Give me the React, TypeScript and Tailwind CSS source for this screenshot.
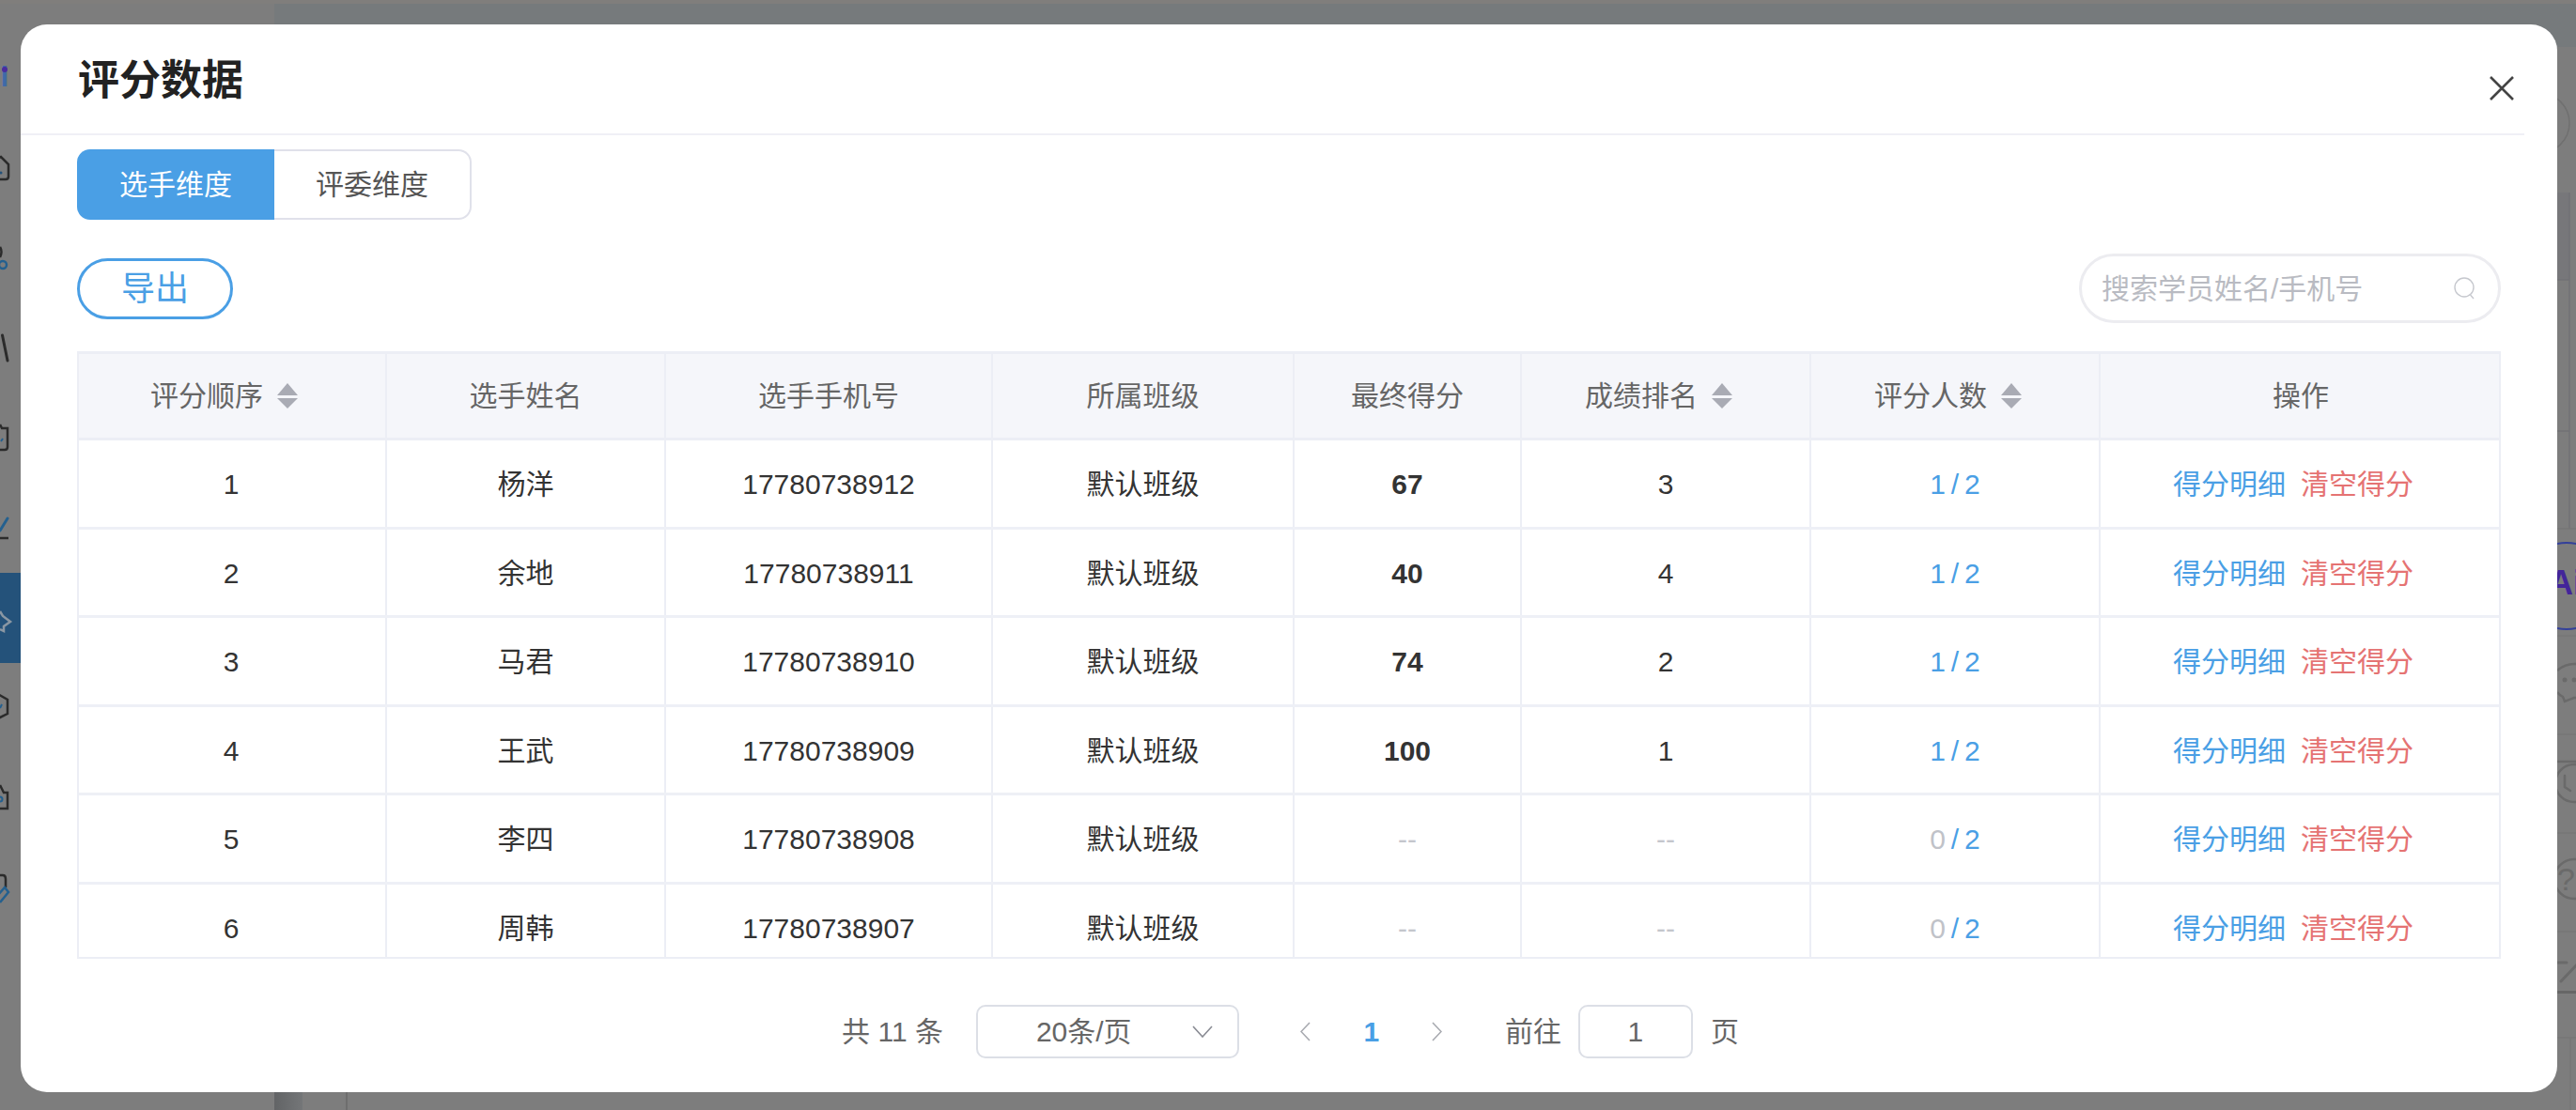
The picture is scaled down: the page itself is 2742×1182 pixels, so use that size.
const columns = 'grid-cols-[330px_297px_348px_321px_242px_308px_308px_426px]'

const rows = [
  { no: 1, name: '杨洋', phone: '17780738912', score: '67', rank: '3', done: 1 },
  { no: 2, name: '余地', phone: '17780738911', score: '40', rank: '4', done: 1 },
  { no: 3, name: '马君', phone: '17780738910', score: '74', rank: '2', done: 1 },
  { no: 4, name: '王武', phone: '17780738909', score: '100', rank: '1', done: 1 },
  { no: 5, name: '李四', phone: '17780738908', score: '--', rank: '--', done: 0 },
  { no: 6, name: '周韩', phone: '17780738907', score: '--', rank: '--', done: 0 },
]

function SortIcon() {
  return (
    <svg viewBox="0 0 22 27" className="mx-[15px] h-[27px] w-[22px] shrink-0">
      <path d="M11 0 22 13H0Z" fill="#a9abb4" />
      <path d="M0 16H22L11 27Z" fill="#a9abb4" />
    </svg>
  )
}

function HeadCell({ label, sort, last }: { label: string; sort?: boolean; last?: boolean }) {
  return (
    <div className={`flex items-center justify-center ${last ? '' : 'border-r-2 border-[#eceef5]'}`}>
      <span>{label}</span>
      {sort && <SortIcon />}
    </div>
  )
}

function Cell({ children, last, bold }: { children: React.ReactNode; last?: boolean; bold?: boolean }) {
  return (
    <div className={`flex items-center justify-center pt-[2px] ${last ? '' : 'border-r-2 border-[#eceef5]'} ${bold ? 'font-bold' : ''}`}>
      {children}
    </div>
  )
}

function Table() {
  return (
    <div className="mt-[30px] h-[647px] w-[2580px] overflow-hidden border-x-2 border-b-2 border-[#eceef5]">
      <div className={`grid h-[95px] ${columns} -mx-[2px] border-y-[3px] border-[#eceef5] bg-[#f5f6fa] text-[#666666]`}>
        <HeadCell label="评分顺序" sort />
        <HeadCell label="选手姓名" />
        <HeadCell label="选手手机号" />
        <HeadCell label="所属班级" />
        <HeadCell label="最终得分" />
        <HeadCell label="成绩排名" sort />
        <HeadCell label="评分人数" sort />
        <HeadCell label="操作" last />
      </div>
      {rows.map((r) => (
        <div key={r.no} className={`grid h-[94.5px] ${columns} -mx-[2px] border-b-[3px] border-[#eef0f6] text-[#333333]`}>
          <Cell>{r.no}</Cell>
          <Cell>{r.name}</Cell>
          <Cell>{r.phone}</Cell>
          <Cell>默认班级</Cell>
          <Cell bold={r.done > 0}>{r.done > 0 ? r.score : <span className="text-[#c4c6cc]">--</span>}</Cell>
          <Cell>{r.done > 0 ? r.rank : <span className="text-[#c4c6cc]">--</span>}</Cell>
          <Cell>
            <span className="whitespace-pre text-[#4a9fe5] [word-spacing:-2.5px]">
              <span className={r.done > 0 ? '' : 'text-[#c0c2c8]'}>{r.done}</span> / 2
            </span>
          </Cell>
          <Cell last>
            <span className="mr-4 text-[#4a9fe5]">得分明细</span>
            <span className="mr-4 text-[#e57373]">清空得分</span>
          </Cell>
        </div>
      ))}
    </div>
  )
}

function Pagination() {
  return (
    <div className="mt-[49px] flex h-[57px] items-center justify-center pl-[3px] text-[#666666]">
      <span className="whitespace-pre">共 11 条</span>
      <div className="ml-[35px] flex h-[57px] w-[280px] items-center justify-between rounded-[10px] border-2 border-[#dcdfe6] pl-[62px] pr-[26px]">
        <span>20条/页</span>
        <svg viewBox="0 0 22 13" className="h-[13px] w-[22px]" fill="none" stroke="#8a8c94" strokeWidth="1.6">
          <path d="M1 1 11 12 21 1" />
        </svg>
      </div>
      <div className="ml-[36px] flex">
        <div className="flex h-[57px] w-[70px] items-center justify-center">
          <svg viewBox="0 0 11 21" className="h-[21px] w-[11px]" fill="none" stroke="#a8aab0" strokeWidth="1.6">
            <path d="M10 1 1 10.5 10 20" />
          </svg>
        </div>
        <div className="flex h-[57px] w-[70px] items-center justify-center font-bold text-[#4a9fe5]">1</div>
        <div className="flex h-[57px] w-[70px] items-center justify-center">
          <svg viewBox="0 0 11 21" className="h-[21px] w-[11px]" fill="none" stroke="#a8aab0" strokeWidth="1.6">
            <path d="M1 1 10 10.5 1 20" />
          </svg>
        </div>
      </div>
      <span className="ml-[37px]">前往</span>
      <div className="ml-[18px] flex h-[57px] w-[122px] items-center justify-center rounded-[10px] border-2 border-[#dcdfe6]">1</div>
      <span className="ml-[19px]">页</span>
    </div>
  )
}

function Modal() {
  return (
    <div className="relative flex h-[1137px] w-[2700px] flex-col rounded-[28px] bg-white pl-[60px] pr-[60px]">
      <div className="-ml-[60px] h-[118px] w-[2665px] border-b-2 border-[#f0f0f6] pl-[61px] pt-[37px] text-[44px] font-semibold leading-[46px] text-[#222222]">
        评分数据
      </div>
      <button className="absolute right-[46px] top-[55px] h-[26px] w-[26px]">
        <svg viewBox="0 0 26 26" className="h-[26px] w-[26px]" stroke="#444444" strokeWidth="2.6">
          <path d="M1 1 25 25M25 1 1 25" />
        </svg>
      </button>

      <div className="mt-[15px] flex h-[75px] w-[420px]">
        <div className="flex w-[210px] items-center justify-center rounded-l-[14px] bg-[#4a9fe5] text-white">选手维度</div>
        <div className="flex w-[210px] items-center justify-center rounded-r-[14px] border-2 border-l-0 border-[#e0e1ea] text-[#555555]">评委维度</div>
      </div>

      <div className="mt-[36px] flex h-[74px] items-center justify-between">
        <button className="h-[65px] w-[166px] rounded-full border-[3px] border-[#4a9fe5] pt-[2px] text-[36px] text-[#4a9fe5]">导出</button>
        <div className="flex h-[74px] w-[449px] items-center justify-between rounded-full border-[3px] border-[#ececf0] pl-[21px] pr-[23px] text-[#b9bbc2]">
          <span>搜索学员姓名/手机号</span>
          <svg viewBox="0 0 24 24" className="h-[24px] w-[24px]" fill="none" stroke="#c6c8ce" strokeWidth="1.4">
            <circle cx="11" cy="11" r="10" />
            <path d="M17.5 19 21 23" />
          </svg>
        </div>
      </div>

      <Table />
      <Pagination />
    </div>
  )
}

function LeftStrip() {
  return (
    <svg viewBox="0 0 22 1182" className="absolute left-0 top-0 h-[1182px] w-[22px]" fill="none">
      <text x="-21" y="92" fontSize="30" fontWeight="700" fill="#3f6aa8">Ai</text>
      <circle cx="5" cy="74" r="3" fill="#4a2ca0" />
      <path d="M-6 170 1 167 9 175V188Q9 191 6 191H-6" stroke="#2b2b2b" strokeWidth="2.5" />
      <circle cx="1" cy="184" r="1.5" fill="#24527a" />
      <path d="M0 263Q3 268 0 274" stroke="#2b2b2b" strokeWidth="2.5" />
      <circle cx="3" cy="282" r="4" stroke="#24608f" strokeWidth="2.5" />
      <path d="M2.5 357 8 384" stroke="#2b2b2b" strokeWidth="3" strokeLinecap="round" />
      <path d="M0 452 2 456H8V476Q8 479 5 479H-4" stroke="#2b2b2b" strokeWidth="2.5" />
      <path d="M1 470 3 467" stroke="#24608f" strokeWidth="2" />
      <path d="M0 565 8 552" stroke="#24608f" strokeWidth="3" strokeLinecap="round" />
      <path d="M-2 573H9" stroke="#2b2b2b" strokeWidth="2.5" />
      <rect x="0" y="610" width="22" height="96" fill="#24527a" />
      <path d="M0 651 3 656 11 662 4 667 4 672 0 670" stroke="#8a97a3" strokeWidth="2.5" />
      <path d="M-4 738 8 745V760L-4 766" stroke="#2b2b2b" strokeWidth="2.5" />
      <path d="M2 750 0 754" stroke="#24608f" strokeWidth="2" />
      <path d="M0 836 4 844H8V861H-4" stroke="#2b2b2b" strokeWidth="2.5" />
      <circle cx="0" cy="851" r="2.5" stroke="#24608f" strokeWidth="2" />
      <path d="M-2 932H3Q6 932 6 936V945" stroke="#2b2b2b" strokeWidth="2.5" />
      <path d="M0 961 9 950 5 945 -3 954" stroke="#24608f" strokeWidth="2.5" />
    </svg>
  )
}

function RightStrip() {
  return (
    <svg viewBox="0 0 20 1182" className="absolute left-[2722px] top-0 h-[1182px] w-[20px]" fill="none">
      <circle cx="-19" cy="131" r="32" stroke="#707070" strokeWidth="1.5" />
      <rect x="0" y="205" width="13" height="93" fill="#77777a" />
      <path d="M0 298H13M13 205V563M0 459H13" stroke="#717175" strokeWidth="1.5" />
      <path d="M0 563H20M0 677H20M0 782H20M0 887H20M0 992H20" stroke="#747474" strokeWidth="1" />
      <circle cx="10" cy="624" r="46" stroke="#33409a" strokeWidth="2" />
      <text x="-9" y="633" fontSize="36" fontWeight="700" fill="#42259a">Ai</text>
      <path d="M0 714Q8 707 18 707 37 707 37 726 37 743 18 743L8 747 6 742Q2 740 0 737" stroke="#6a6a6a" strokeWidth="2.5" />
      <circle cx="8" cy="724" r="2.5" fill="#6a6a6a" />
      <circle cx="18" cy="724" r="2.5" fill="#6a6a6a" />
      <path d="M0 811H20" stroke="#6a6a6a" strokeWidth="2.5" />
      <circle cx="18" cy="834" r="20" stroke="#6a6a6a" strokeWidth="2.5" />
      <path d="M8 826V838L14 842" stroke="#6a6a6a" strokeWidth="2.5" strokeLinecap="round" />
      <circle cx="18" cy="936" r="21" stroke="#6a6a6a" strokeWidth="2.5" />
      <text x="0" y="948" fontSize="34" fill="#6a6a6a">?</text>
      <path d="M0 1025H10M4 1045 22 1026" stroke="#6a6a6a" strokeWidth="3" strokeLinecap="round" />
      <path d="M0 1056.5H20" stroke="#666666" strokeWidth="3" />
      <path d="M0 1105H20M14 1105V1182" stroke="#747474" strokeWidth="1" />
    </svg>
  )
}

export default function App() {
  return (
    <div className="relative h-[1182px] w-[2742px] overflow-hidden bg-[#7d7d7d] pl-[22px] pt-[26px] text-[30px] [font-family:'Liberation_Sans','Noto_Sans_CJK_SC',sans-serif]">
      {/* dimmed page behind the dialog */}
      <div className="absolute left-[292px] right-0 top-[4px] h-[46px] bg-[#767a7c]" />
      <div className="absolute left-0 right-0 top-0 h-[4px] bg-[#807e7c]" />
      <div className="absolute bottom-0 left-[292px] h-[20px] w-[30px] bg-gradient-to-r from-[#626466] to-[#747678]" />
      <div className="absolute bottom-0 left-[368px] h-[20px] w-[2px] bg-[#6e6e6e]" />
      <LeftStrip />
      <RightStrip />
      <Modal />
    </div>
  )
}
